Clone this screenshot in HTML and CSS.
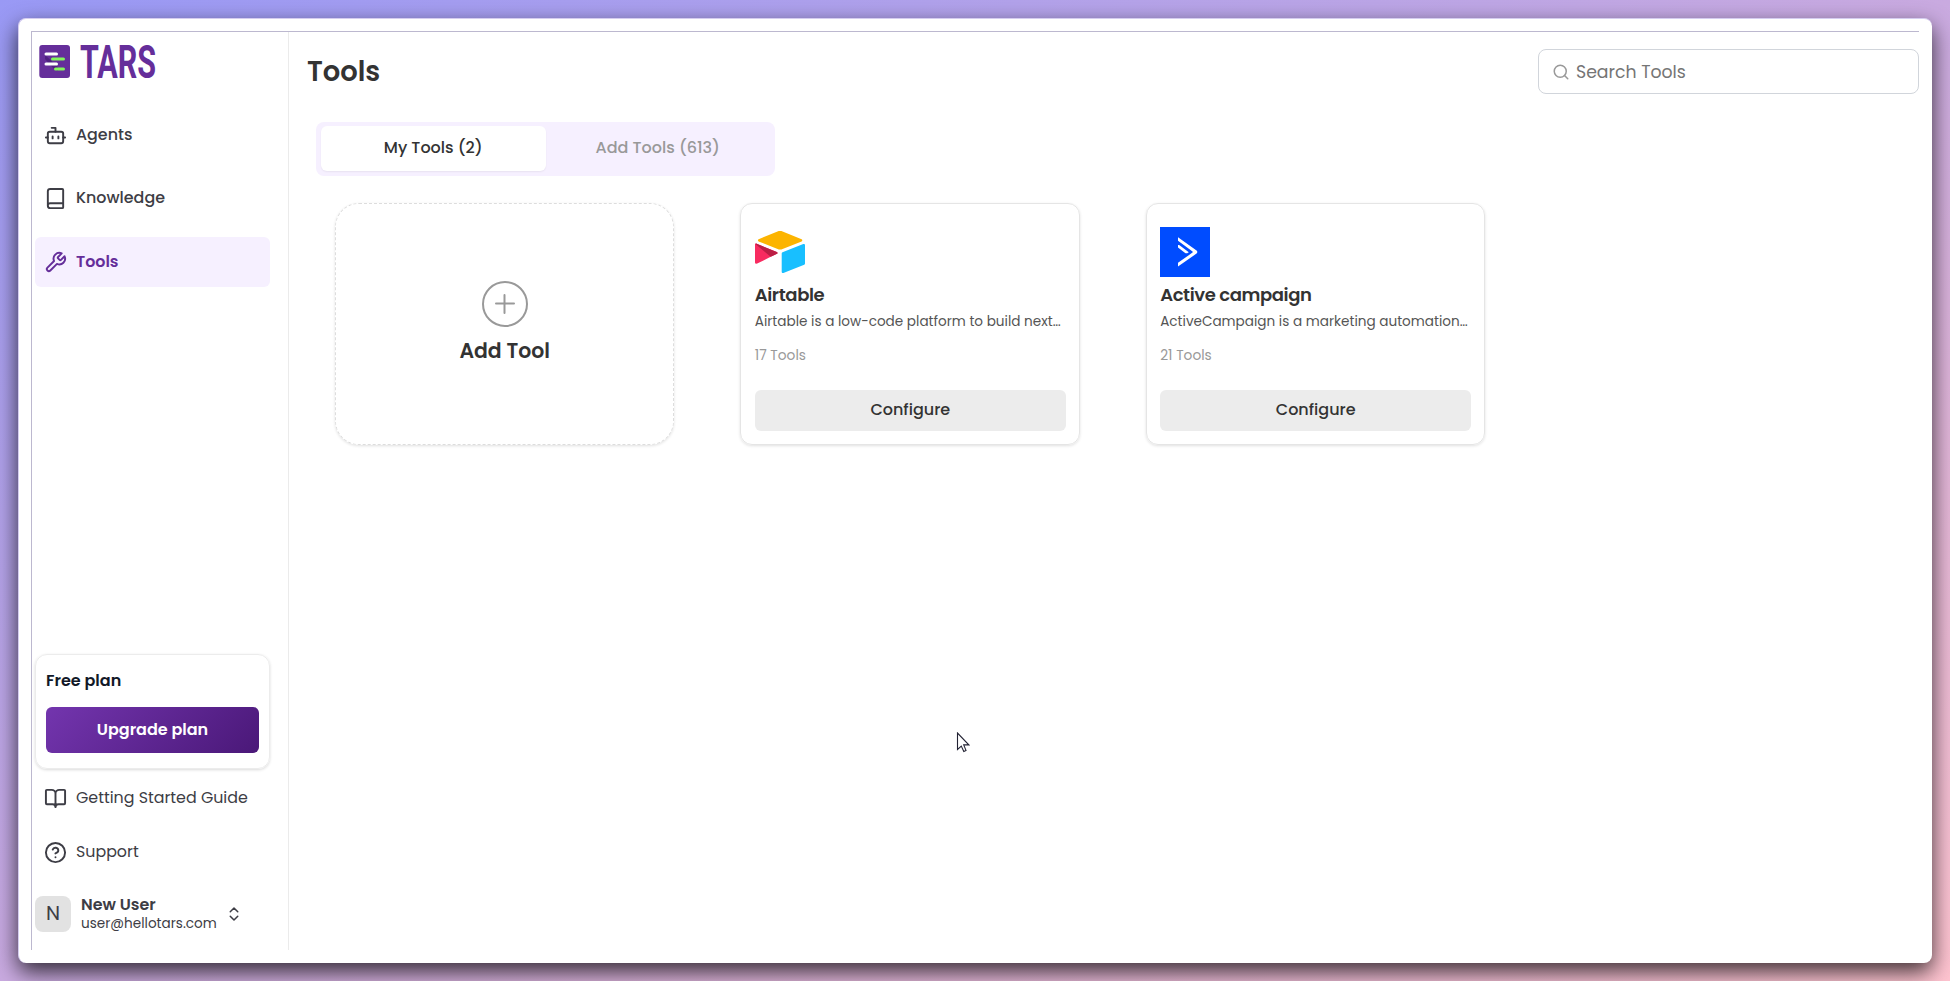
FILE: index.html
```html
<!DOCTYPE html>
<html lang="en">
<head>
<meta charset="utf-8">
<title>Tools</title>
<link rel="stylesheet" href="styles.css">
</head>
<body>
<div class="window">
<div class="app">
  <aside class="sidebar">
    <div class="logo">
      <svg width="31" height="33" viewBox="0 0 31 33"><rect x=".3" width="30.700" height="33" rx="3" fill="#652e9a"/><path d="M6 10 19 22v4l-4-2-9-10z" fill="#4f2080"/><g stroke-width="3" stroke-linecap="round"><path d="M7 9H17.500M7 19H17.500" stroke="#fff"/><path d="M13.500 14H24.500M16.500 24H24.500" stroke="#83f55c"/></g></svg>
      <svg class="wordmark" width="76" height="34" viewBox="0 0 76 34"><text x="0" y="33" textLength="76" lengthAdjust="spacingAndGlyphs">TARS</text></svg>
    </div>
    <nav class="nav">
      <a class="nav-item"><svg class="icon" viewBox="0 0 24 24"><path d="M12 8V4H8"/><rect width="16" height="12" x="4" y="8" rx="2"/><path d="M2 14h2M20 14h2M15 13v2M9 13v2"/></svg><span>Agents</span></a>
      <a class="nav-item"><svg class="icon" viewBox="0 0 24 24"><path d="M4 19.500v-15A2.500 2.500 0 0 1 6.500 2H19a1 1 0 0 1 1 1v18a1 1 0 0 1-1 1H6.500a1 1 0 0 1 0-5H20"/></svg><span>Knowledge</span></a>
      <a class="nav-item active"><svg class="icon" viewBox="0 0 24 24"><path d="M14.700 6.300a1 1 0 0 0 0 1.400l1.600 1.600a1 1 0 0 0 1.400 0l3.770-3.770a6 6 0 0 1-7.940 7.940l-6.910 6.910a2.120 2.120 0 0 1-3-3l6.910-6.910a6 6 0 0 1 7.940-7.940l-3.760 3.760z"/></svg><span>Tools</span></a>
    </nav>
    <div class="plan">
      <div class="plan-name">Free plan</div>
      <button class="upgrade">Upgrade plan</button>
    </div>
    <div class="links">
      <a class="link"><svg class="icon" viewBox="0 0 24 24"><path d="M12 7v14M3 18a1 1 0 0 1-1-1V4a1 1 0 0 1 1-1h5a4 4 0 0 1 4 4 4 4 0 0 1 4-4h5a1 1 0 0 1 1 1v13a1 1 0 0 1-1 1h-6a3 3 0 0 0-3 3 3 3 0 0 0-3-3z"/></svg><span>Getting Started Guide</span></a>
      <a class="link"><svg class="icon" viewBox="0 0 24 24"><circle cx="12" cy="12" r="10"/><path d="M9.090 9a3 3 0 0 1 5.830 1c0 2-3 3-3 3M12 17h.01"/></svg><span>Support</span></a>
    </div>
    <div class="user">
      <div class="avatar">N</div>
      <div class="who"><div class="name">New User</div><div class="mail">user@hellotars.com</div></div>
      <svg class="chev" viewBox="0 0 24 24"><path d="m7 15 5 5 5-5M7 9l5-5 5 5"/></svg>
    </div>
  </aside>
  <main class="main">
    <header class="head">
      <h1>Tools</h1>
      <div class="search"><svg class="glass" viewBox="0 0 24 24"><circle cx="11" cy="11" r="8"/><path d="m21 21-4.300-4.300"/></svg><span>Search Tools</span></div>
    </header>
    <div class="tabs"><div class="tab on">My Tools (2)</div><div class="tab">Add Tools (613)</div></div>
    <section class="cards">
      <div class="card add">
        <svg width="46" height="46" viewBox="0 0 46 46" fill="none" stroke="#999" stroke-width="2"><circle cx="23" cy="23" r="22"/><path d="M14 22.500h18M22.500 14v18" stroke-linecap="round"/></svg>
        <div class="add-label">Add Tool</div>
      </div>
      <div class="card">
        <svg class="brand" viewBox="0 0 50 50"><path d="M22.500 4.400 3.600 12.200c-1 .5-1 1.700 0 2.200l19 7.500c1.700.7 3.400.7 5 0l19-7.500c1-.5 1-1.700 0-2.200L27.600 4.400c-1.700-.6-3.400-.6-5.100 0z" fill="#fcb400"/><path d="M26.700 26.400v18.400c0 1 .8 1.500 1.700 1.200l20.800-8.200c.5-.2.8-.7.800-1.200V18.200c0-1-.8-1.500-1.700-1.200l-20.800 8.200c-.5.2-.8.700-.8 1.200z" fill="#18bfff"/><path d="m22 26.800-6.300 3-13.500 6.800C1.200 37 0 36.400 0 35.400V17.600c0-.8 1-1.200 1.700-.9L21.800 25c1 .4 1 1.300.2 1.800z" fill="#f82b60"/><path d="m22 26.800-6.300 3L.4 17c.3-.4.8-.5 1.300-.3L21.800 25c1 .4 1 1.300.2 1.800z" fill="#ba1e45"/></svg>
        <h2>Airtable</h2>
        <p class="desc">Airtable is a low-code platform to build next…</p>
        <p class="count">17 Tools</p>
        <button class="configure">Configure</button>
      </div>
      <div class="card">
        <svg class="brand" viewBox="0 0 50 50"><path d="M0 0h50v50H0z" fill="#004cff"/><path d="M18 10.200v3.600l14.500 10.700c.4.300.4.800 0 1.100L18 35.800v3.700l18.200-12.700c1.500-1.100 1.500-2.500 0-3.600zM18 18.300v2.200l6.800 5.200c1 .8 2.200.8 3.200.1l.8-.6-9.300-6.900c-.7-.5-1.500-.4-1.500 0z" fill="#fff"/></svg>
        <h2>Active campaign</h2>
        <p class="desc">ActiveCampaign is a marketing automation…</p>
        <p class="count">21 Tools</p>
        <button class="configure">Configure</button>
      </div>
    </section>
  </main>
</div>
</div>
<svg class="cursor" width="14" height="22" viewBox="0 0 14 22"><path d="M1.500 1v16.500l3.800-3.400L7.800 19.400l2.200-1-2.300-5.500H12.800z" fill="#fff" stroke="#223" stroke-width="1.100"/></svg>
</body>
</html>
```
FILE: styles.css
```css
* { box-sizing: border-box; margin: 0; padding: 0; }
body {
  width: 1950px; height: 981px; overflow: hidden; padding: 18px;
  background: linear-gradient(to bottom right, #9999f5, #c9aae0 50%, #ffc4d0);
  font-family: Poppins, Inter, "Open Sans", sans-serif;
  font-size: 16px; color: #333;
}
.window { height: 945px; padding: 12px 13px 13px 12px; border-top: 1px solid #d5cdf0; border-left: 1px solid #d5cdf0; border-radius: 8px; background: #fff; box-shadow: 0 9px 22px rgba(0,0,0,.75); }
.app { display: flex; height: 919px; border-top: 1px solid #bcb8cf; border-left: 1px solid #bcb8cf; white-space: nowrap; }
.sidebar { width: 257px; border-right: 1px solid #ebebeb; padding-left: 3px; display: flex; flex-direction: column; color: #3d3d45; }
.logo { display: flex; padding: 13px 0 0 4px; gap: 10px; height: 78px; }
.wordmark { overflow: visible; }
.wordmark text { font: 700 46px Roboto, sans-serif; fill: #652e9a; }
.icon { width: 23px; height: 23px; fill: none; stroke: currentColor; stroke-width: 2; stroke-linecap: round; stroke-linejoin: round; flex: none; }
.nav { display: flex; flex-direction: column; gap: 13.500px; font-size: 15.900px; font-weight: 500; }
.nav-item { display: flex; align-items: center; gap: 9px; width: 235px; height: 50px; padding-left: 9px; border-radius: 6px; }
.nav-item span, .link span { padding-bottom: 2px; }
.nav-item.active { background: #f6f0ff; color: #652e9a; font-weight: 600; }
.plan { margin-top: auto; width: 235px; height: 115px; padding: 16px 11px 0 10px; border: 1px solid #ececec; border-radius: 12px; box-shadow: 0 1px 3px rgba(0,0,0,.15); }
.plan-name { color: #111827; font-weight: 600; line-height: 20px; }
.upgrade { display: block; margin-top: 16px; width: 213px; height: 46px; padding-bottom: 2px; border: 0; border-radius: 6px; background: linear-gradient(135deg, #7335ae, #4a1878); color: #fff; font: inherit; font-weight: 600; }
.links { display: flex; flex-direction: column; padding: 2px 0 0 9px; font-size: 15.850px; }
.link { display: flex; align-items: center; gap: 9px; height: 54px; }
.user { display: flex; align-items: center; height: 72px; margin-top: -1px; }
.avatar { width: 36px; height: 36px; border-radius: 8px; background: #e2e2e2; font-size: 20px; line-height: 35px; text-align: center; }
.who { margin-left: 10px; width: 139px; padding-bottom: 1px; }
.name { font-size: 15.900px; font-weight: 600; line-height: 20px; }
.mail { font-size: 13.600px; line-height: 18px; }
.chev { width: 18px; height: 18px; margin-left: 5px; fill: none; stroke: currentColor; stroke-width: 2; stroke-linecap: round; stroke-linejoin: round; }
.main { flex: 1; }
.head { display: flex; justify-content: space-between; padding: 17px 0 0 18px; height: 90px; }
h1 { font-size: 27.400px; font-weight: 600; line-height: 45px; }
.search { display: flex; align-items: center; gap: 6px; width: 381px; height: 45px; padding-left: 13px; border: 1px solid #d1d5db; border-radius: 8px; font-size: 17.300px; color: #757575; }
.glass { width: 18px; height: 18px; fill: none; stroke: #999; stroke-width: 2; stroke-linecap: round; }
.tabs { display: flex; width: 459px; height: 54px; margin-left: 27px; padding: 4px 5px 5px; border-radius: 8px; background: #f6f0ff; }
.tab { width: 225px; line-height: 44px; text-align: center; border-radius: 6px; font-weight: 500; color: #999; }
.tab.on { background: #fff; color: #333; box-shadow: 0 1px 2px rgba(0,0,0,.06); }
.cards { display: grid; grid-template-columns: repeat(3, 339.400px); column-gap: 66px; padding: 27px 0 0 46px; }
.card { height: 242px; padding: 23px 13px 0 13.400px; border: 1px solid #e5e5e5; border-radius: 12px; box-shadow: 0 1px 3px rgba(0,0,0,.12); }
.card.add { display: flex; flex-direction: column; align-items: center; padding: 77px 0 0; border: 1px dashed #ddd; border-radius: 24px; }
.add-label { margin-top: 10px; font-size: 20.400px; font-weight: 600; line-height: 28px; }
.brand { display: block; width: 50px; height: 50px; }
h2 { margin-top: 6px; font-size: 18px; font-weight: 600; line-height: 24px; letter-spacing: -.4px; }
.desc { margin-top: 5px; font-size: 13.600px; line-height: 20px; color: #555; }
.count { margin-top: 14px; font-size: 13.750px; line-height: 20px; color: #999; }
.configure { display: block; margin-top: 24px; width: 311px; height: 41px; padding-bottom: 2px; border: 0; border-radius: 6px; background: #ececec; font: inherit; font-weight: 500; color: #333; }
.cursor { position: absolute; left: 956px; top: 732px; }
```
